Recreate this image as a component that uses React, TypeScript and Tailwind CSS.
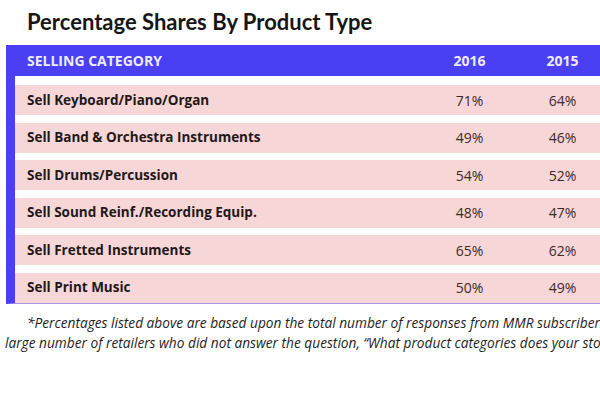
import React from "react";

const rows = [
  { label: "Sell Keyboard/Piano/Organ", y2016: "71%", y2015: "64%" },
  { label: "Sell Band & Orchestra Instruments", y2016: "49%", y2015: "46%" },
  { label: "Sell Drums/Percussion", y2016: "54%", y2015: "52%" },
  { label: "Sell Sound Reinf./Recording Equip.", y2016: "48%", y2015: "47%" },
  { label: "Sell Fretted Instruments", y2016: "65%", y2015: "62%" },
  { label: "Sell Print Music", y2016: "50%", y2015: "49%" },
];

export default function App() {
  return (
    <div
      className="w-[600px] h-[400px] overflow-hidden bg-white text-[#1f1a1a]"
      style={{ fontFamily: "'Open Sans', 'Noto Sans', sans-serif" }}
    >
      <h1
        className="pl-[27px] pt-[9px] h-[45px] text-[22px] leading-[26px] font-bold text-[#161616] whitespace-nowrap"
        style={{ fontFamily: "Lato, 'Open Sans', sans-serif" }}
      >
        Percentage Shares By Product Type
      </h1>

      <div className="w-[620px] ml-[6px] border-l-[9px] border-[#4a3ff2] border-b border-b-[#a596e6]">
        <div className="h-[31px] bg-[#4a3ff2] flex items-center text-[14px] font-bold text-[#ecebff]">
          <div className="pl-[12px] w-[408px]">SELLING CATEGORY</div>
          <div className="w-[93px] text-center">2016</div>
          <div className="w-[93px] text-center">2015</div>
        </div>
        <div className="flex flex-col gap-[7.5px] pt-[9px]">
          {rows.map((r) => (
            <div
              key={r.label}
              className="h-[30px] bg-[#f7d6d7] flex items-center text-[13.5px]"
            >
              <div className="pl-[12px] w-[408px] font-bold text-[#231818] whitespace-nowrap">
                {r.label}
              </div>
              <div className="w-[93px] text-center text-[14px] text-[#3a2a2a]">{r.y2016}</div>
              <div className="w-[93px] text-center text-[14px] text-[#3a2a2a]">{r.y2015}</div>
            </div>
          ))}
        </div>
      </div>

      <div className="mt-[9px] text-[13.7px] leading-[20px] italic text-[#1e1e1e] whitespace-nowrap overflow-hidden">
        <p className="pl-[27px]">
          *Percentages listed above are based upon the total number of responses from MMR subscribers.
        </p>
        <p className="pl-[5px]">
          large number of retailers who did not answer the question, “What product categories does your store sell?”
        </p>
      </div>
    </div>
  );
}
